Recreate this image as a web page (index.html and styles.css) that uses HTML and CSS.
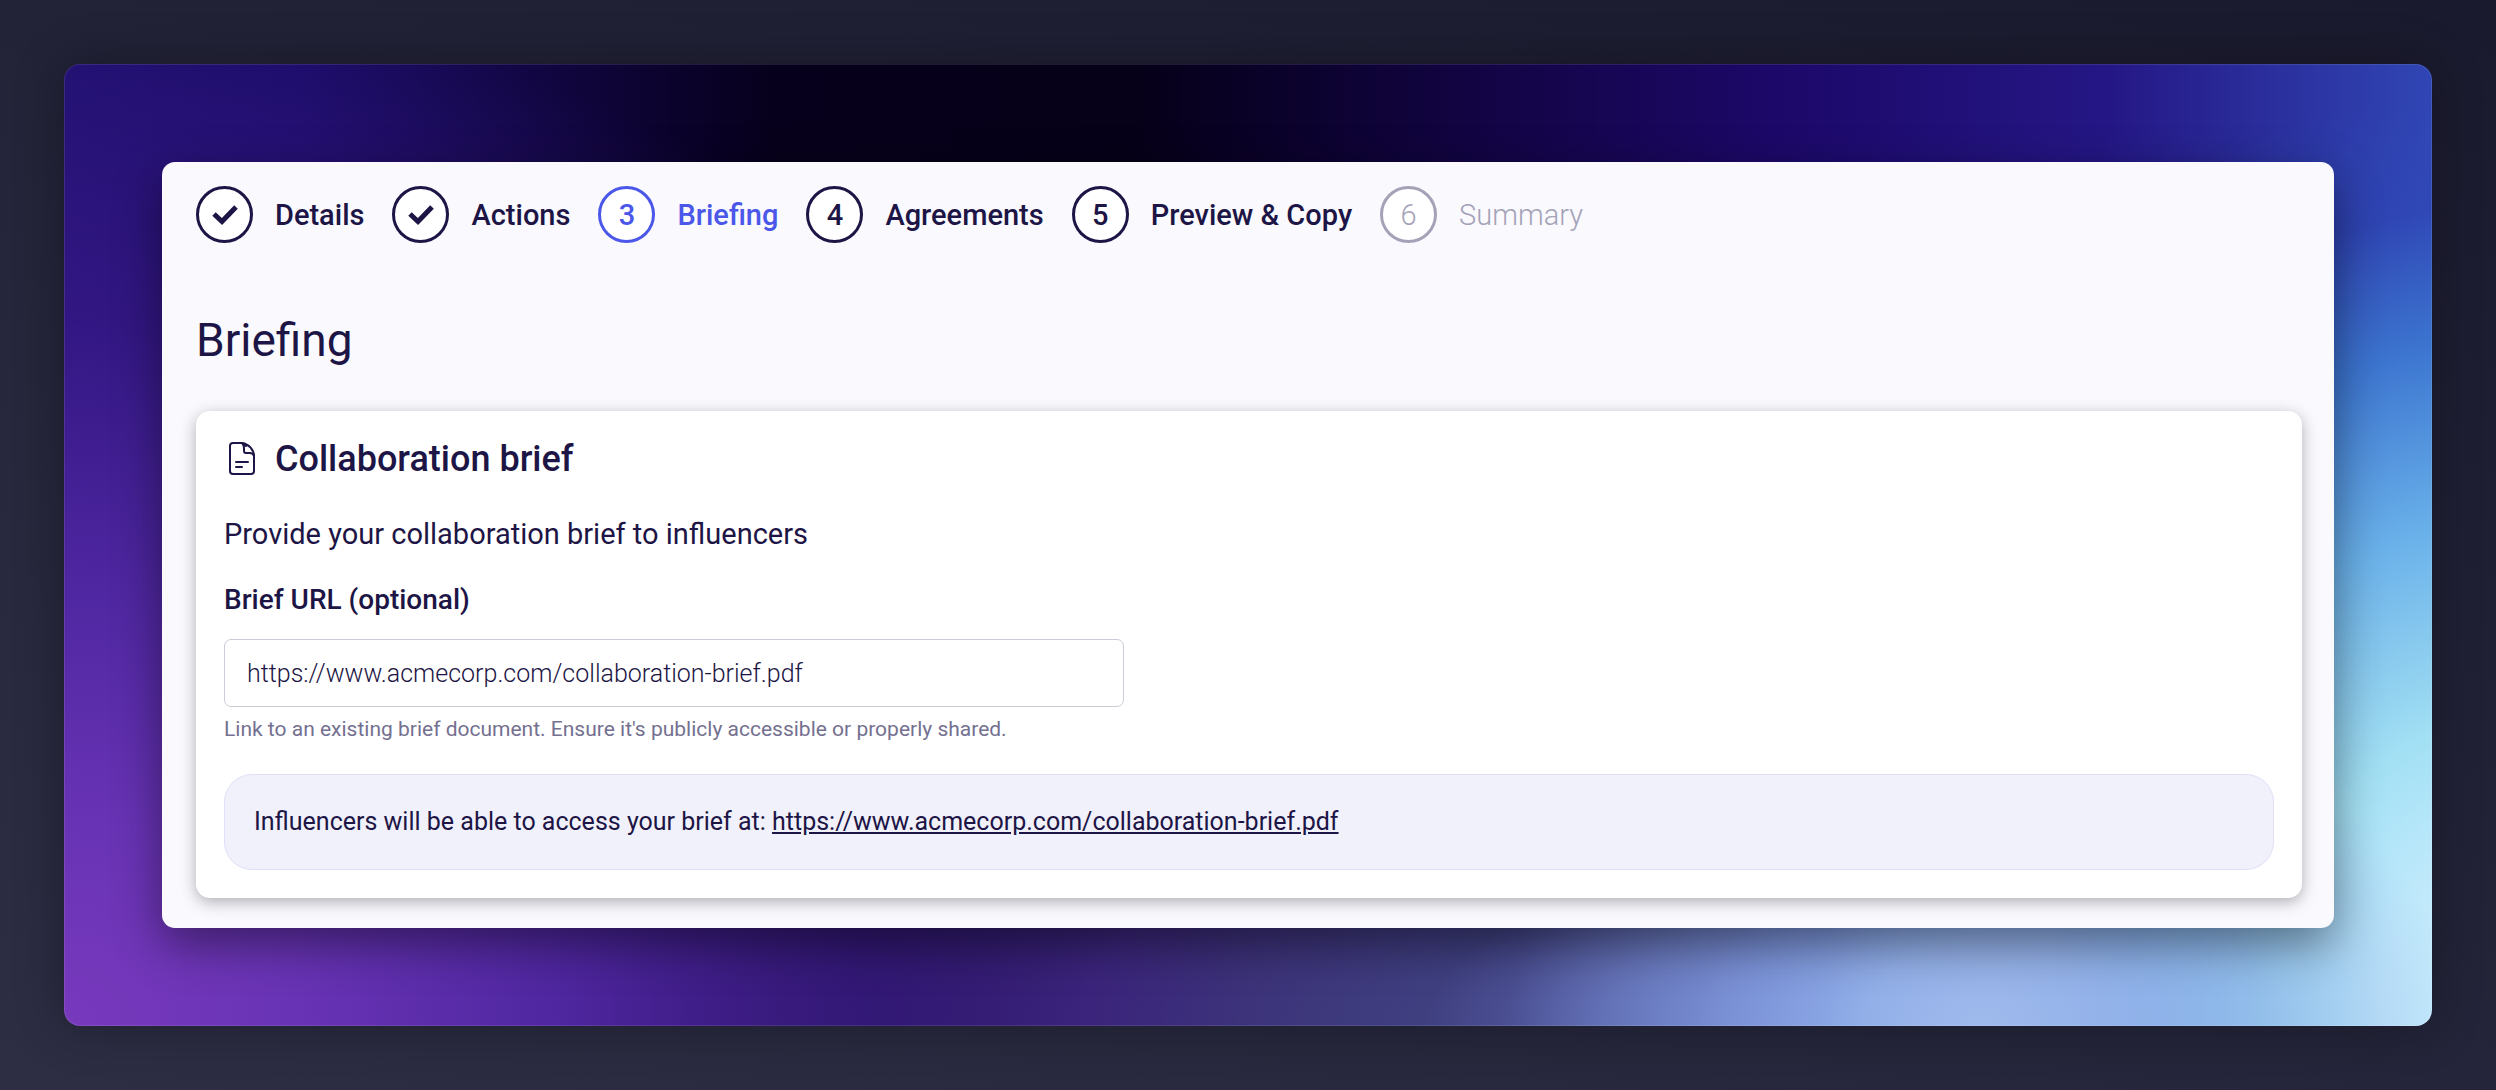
FILE: index.html
```html
<!DOCTYPE html>
<html lang="en">
<head>
    <meta charset="UTF-8">
    <meta name="viewport" content="width=device-width, initial-scale=1.0">
    <title>Briefing</title>
    <link rel="stylesheet" href="styles.css">
</head>
<body>
    <div class="backdrop">
        <main class="window">
            <!-- Steps -->
            <nav aria-label="Steps">
                <ol class="steps">
                    <li class="step">
                        <span class="step-circle">
                            <svg viewBox="0 0 28 24" aria-hidden="true"><path d="M3 11L11 18.5L25 4"/></svg>
                        </span>
                        <span>Details</span>
                    </li>
                    <li class="step">
                        <span class="step-circle">
                            <svg viewBox="0 0 28 24" aria-hidden="true"><path d="M3 11L11 18.5L25 4"/></svg>
                        </span>
                        <span>Actions</span>
                    </li>
                    <li class="step active" aria-current="step">
                        <span class="step-circle">3</span>
                        <span>Briefing</span>
                    </li>
                    <li class="step">
                        <span class="step-circle">4</span>
                        <span>Agreements</span>
                    </li>
                    <li class="step">
                        <span class="step-circle">5</span>
                        <span>Preview &amp; Copy</span>
                    </li>
                    <li class="step disabled">
                        <span class="step-circle">6</span>
                        <span>Summary</span>
                    </li>
                </ol>
            </nav>

            <h1>Briefing</h1>

            <!-- Brief card -->
            <section class="card">
                <h2>
                    <svg class="doc-icon" viewBox="0 0 36 36" aria-hidden="true">
                        <path d="M9 2H18C25 3 30 9 30 15V30Q30 33 27 33H9Q6 33 6 30V5Q6 2 9 2Z"/>
                        <path d="M18 2Q20 4 20 7V10Q20 12 22 12H26Q29 12 30 15M18 2Q21 3 22 5"/>
                        <path d="M12 21H24M12 26H18"/>
                    </svg>
                    Collaboration brief
                </h2>
                <p class="intro">Provide your collaboration brief to influencers</p>
                <label for="brief-url">Brief URL (optional)</label>
                <input type="text" id="brief-url" value="https://www.acmecorp.com/collaboration-brief.pdf" aria-describedby="brief-help">
                <p class="help" id="brief-help">Link to an existing brief document. Ensure it's publicly accessible or properly shared.</p>
                <div class="notice">
                    Influencers will be able to access your brief at:
                    <a href="https://www.acmecorp.com/collaboration-brief.pdf">https://www.acmecorp.com/collaboration-brief.pdf</a>
                </div>
            </section>
        </main>
    </div>
</body>
</html>
```

FILE: styles.css
```css
* {
    box-sizing: border-box;
}
body {
    margin: 0;
    padding: 64px;
    min-height: 100vh;
    font-family: Roboto, sans-serif;
    color: #1d1545;
    background: linear-gradient(20deg, #2d2d44 0%, #1a1a2e 100%);
}
.backdrop {
    padding: 97px;
    border: 1px solid rgba(255, 255, 255, 0.1);
    border-radius: 16px;
    background:
        radial-gradient(ellipse 20% 36% at 81% 100%, #9fbaec 0%, rgba(150, 178, 234, 0.95) 25%, rgba(130, 155, 222, 0.5) 60%, rgba(110, 130, 205, 0) 100%),
        radial-gradient(ellipse 34% 96% at 104% 98%, #c8eefd 0%, #c0e9fb 18%, rgba(165, 229, 248, 0.97) 32%, rgba(110, 185, 238, 0.93) 53%, rgba(63, 127, 214, 0.85) 72%, rgba(47, 75, 185, 0.5) 87%, rgba(47, 69, 176, 0) 100%),
        radial-gradient(ellipse 50% 108% at 0% 100%, #7839bd 0%, #6833b5 20%, rgba(82, 40, 164, 0.95) 42%, rgba(60, 26, 142, 0.65) 68%, rgba(34, 18, 122, 0) 100%),
        radial-gradient(ellipse 76% 48% at 100% 100%, #c4eafc 0%, #a8cdf3 15%, #8fa5e5 27%, #6a7bc4 39%, #3f3f80 56%, #3a2875 75%, rgba(50, 30, 110, 0) 100%),
        linear-gradient(90deg, #1f106e 0%, #1b0c68 10%, #07001c 30%, #060018 45%, #1c0868 72%, #241684 86%, #3046b4 100%);
    background-origin: border-box;
    box-shadow: 0 0 50px rgba(0, 0, 0, 0.3);
}
.window {
    padding: 24px 32px 30px 34px;
    border-radius: 13px;
    background: #f9f9fe;
    box-shadow: 0 16px 48px rgba(0, 0, 0, 0.45);
}
.steps {
    display: flex;
    flex-wrap: wrap;
    gap: 28px;
    margin: 0;
    padding: 0;
    list-style: none;
    font-size: 29px;
    font-weight: 500;
}
.step {
    display: flex;
    align-items: center;
    gap: 22px;
}
.step-circle {
    display: flex;
    align-items: center;
    justify-content: center;
    width: 57px;
    height: 57px;
    border: 3px solid currentColor;
    border-radius: 50%;
    background: #fff;
}
.step-circle svg {
    width: 28px;
    height: 24px;
    fill: none;
    stroke: currentColor;
    stroke-width: 5;
}
.active {
    color: #4b57e8;
}
.disabled {
    color: #a5a2b8;
    font-weight: 300;
}
h1 {
    margin: 68px 0 42px;
    font-size: 46px;
    font-weight: 400;
    line-height: 58px;
}
.card {
    padding: 28px;
    border-radius: 14px;
    background: #fff;
    box-shadow: 0 4px 16px rgba(0, 0, 0, 0.3);
}
h2 {
    display: flex;
    align-items: center;
    gap: 15px;
    margin: 0 0 38px;
    font-size: 36px;
    font-weight: 500;
    line-height: 40px;
}
.doc-icon {
    width: 36px;
    height: 36px;
    fill: none;
    stroke: currentColor;
    stroke-width: 2;
    stroke-linecap: round;
    stroke-linejoin: round;
}
.intro {
    margin: 0 0 32px;
    font-size: 29px;
    line-height: 34px;
}
label {
    display: block;
    margin-bottom: 22px;
    font-size: 28px;
    font-weight: 500;
    line-height: 34px;
}
input {
    display: block;
    width: 900px;
    max-width: 100%;
    height: 68px;
    padding: 0 22px;
    border: 1px solid #cccbd6;
    border-radius: 7px;
    background: #fff;
    color: inherit;
    font-family: inherit;
    font-size: 25px;
    font-weight: 300;
}
.help {
    margin: 8px 0 31px;
    color: #747090;
    font-size: 21px;
    line-height: 28px;
}
.notice {
    padding: 29px;
    border: 1px solid #dfdff8;
    border-radius: 28px;
    background: #f1f1fc;
    font-size: 25px;
    line-height: 36px;
}
.notice a {
    color: inherit;
}
```
